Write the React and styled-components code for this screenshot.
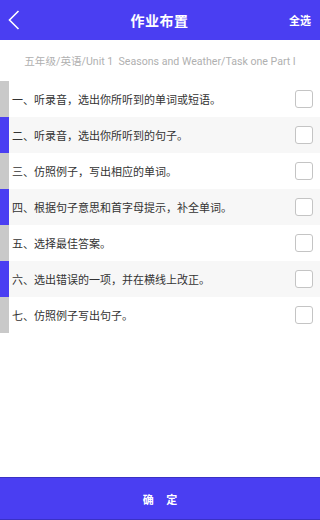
import React from 'react';
import styled, { createGlobalStyle } from 'styled-components';

const GlobalStyle = createGlobalStyle`
  html, body {
    margin: 0;
    padding: 0;
    background: #fff;
  }
  body {
    font-family: Roboto, "Noto Sans CJK SC", sans-serif;
  }
`;

const Page = styled.div`
  width: 320px;
  height: 520px;
  display: flex;
  flex-direction: column;
  background: #fff;
  overflow: hidden;
`;

const Header = styled.header`
  height: 40px;
  flex-shrink: 0;
  background: #4a3ef2;
  display: flex;
  align-items: center;
  justify-content: space-between;
  padding: 0 9px 0 8px;
  color: #fff;
`;

const BackButton = styled.div`
  width: 40px;
  display: flex;
  align-items: center;
`;

const Title = styled.h1`
  margin: 0;
  font-size: 14px;
  font-weight: 700;
  letter-spacing: 0.5px;
`;

const SelectAll = styled.div`
  width: 40px;
  text-align: right;
  font-size: 11px;
  font-weight: 700;
`;

const Crumb = styled.div`
  height: 41px;
  display: flex;
  align-items: center;
  justify-content: center;
  font-size: 10.6px;
  color: #b0b0b0;
  white-space: nowrap;
`;

const List = styled.ul`
  list-style: none;
  margin: 0;
  padding: 0;
  flex: 1;
`;

const Row = styled.li`
  height: 36px;
  display: flex;
  align-items: center;
  background: ${(p) => (p.$alt ? '#f7f7f7' : '#fff')};
  border-left: 9px solid ${(p) => (p.$alt ? '#4a3ef2' : '#c9c9c9')};
  padding: 0 7px 0 3px;
`;

const Label = styled.span`
  flex: 1;
  font-size: 11px;
  color: #333;
`;

const Box = styled.span`
  width: 16px;
  height: 16px;
  border: 1px solid #c4c4c4;
  border-radius: 3px;
  background: #fff;
`;

const Footer = styled.button`
  height: 43px;
  flex-shrink: 0;
  border: none;
  border-top: 1px solid #3a31c4;
  border-bottom: 1px solid #3a31c4;
  background: #4a3ef2;
  color: #fff;
  font-family: "Noto Sans CJK SC", sans-serif;
  font-size: 11px;
  font-weight: 700;
  white-space: pre;
  padding: 0;
`;

const items = [
  '一、听录音，选出你所听到的单词或短语。',
  '二、听录音，选出你所听到的句子。',
  '三、仿照例子，写出相应的单词。',
  '四、根据句子意思和首字母提示，补全单词。',
  '五、选择最佳答案。',
  '六、选出错误的一项，并在横线上改正。',
  '七、仿照例子写出句子。',
];

export default function App() {
  return (
    <>
      <GlobalStyle />
      <Page>
        <Header>
          <BackButton>
            <svg width="12" height="20" viewBox="0 0 12 20" fill="none">
              <path d="M10.5 1 L1.5 10 L10.5 19" stroke="#fff" strokeWidth="1.6" />
            </svg>
          </BackButton>
          <Title>作业布置</Title>
          <SelectAll>全选</SelectAll>
        </Header>
        <Crumb>五年级/英语/Unit 1&nbsp; Seasons and Weather/Task one Part I</Crumb>
        <List>
          {items.map((t, i) => (
            <Row key={i} $alt={i % 2 === 1}>
              <Label>{t}</Label>
              <Box />
            </Row>
          ))}
        </List>
        <Footer>{'确     定'}</Footer>
      </Page>
    </>
  );
}
